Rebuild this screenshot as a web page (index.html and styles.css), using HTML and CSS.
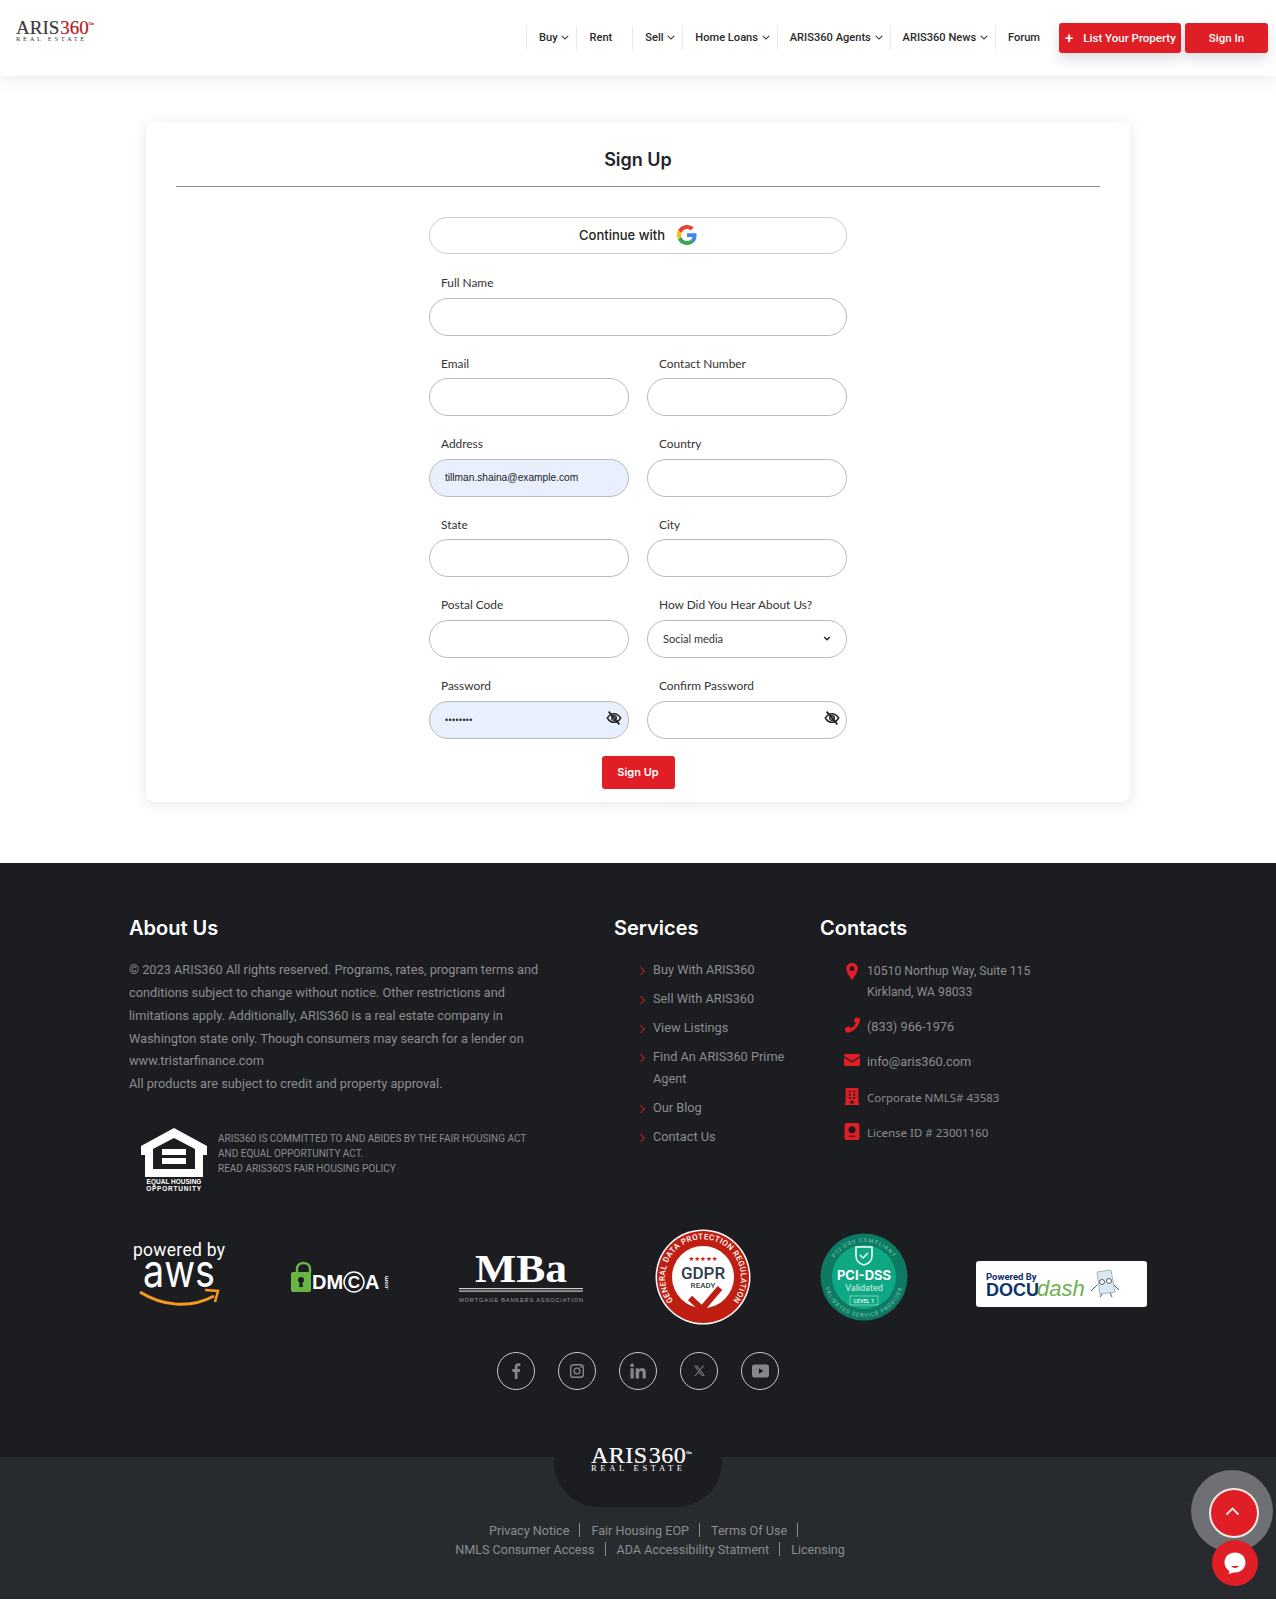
FILE: index.html

```html
<!DOCTYPE html>
<html lang="en">
<head>
  <meta charset="UTF-8" />
  <meta name="viewport" content="width=device-width, initial-scale=1" />
  <title>Sign Up - ARIS360</title>
  <link rel="stylesheet" href="styles.css">
</head>
<body>
  <header class="topbar">
    <a class="logo" href="#">
      <span class="logo-main">ARIS<b>360</b><sup>On</sup></span>
      <span class="logo-sub">REAL ESTATE</span>
    </a>
    <div class="topbar-right">
      <ul class="nav">
        <li><a href="#">Buy <svg class="caret" viewBox="0 0 10 6"><path d="M1 1l4 4 4-4"/></svg></a></li>
        <li class="nav-rent"><a href="#">Rent</a></li>
        <li><a href="#">Sell <svg class="caret" viewBox="0 0 10 6"><path d="M1 1l4 4 4-4"/></svg></a></li>
        <li><a href="#">Home Loans <svg class="caret" viewBox="0 0 10 6"><path d="M1 1l4 4 4-4"/></svg></a></li>
        <li><a href="#">ARIS360 Agents <svg class="caret" viewBox="0 0 10 6"><path d="M1 1l4 4 4-4"/></svg></a></li>
        <li><a href="#">ARIS360 News <svg class="caret" viewBox="0 0 10 6"><path d="M1 1l4 4 4-4"/></svg></a></li>
        <li class="nav-last"><a href="#">Forum</a></li>
      </ul>
      <a class="btn-red btn-list" href="#"><span class="plus">+</span>List Your Property</a>
      <a class="btn-red btn-signin" href="#">Sign In</a>
    </div>
  </header>

  <main class="page">
    <section class="card">
      <h2 class="card-title">Sign Up</h2>
      <form class="signup">
        <button type="button" class="google-btn">
          Continue with
          <svg class="google-g" viewBox="0 0 48 48">
            <path fill="#EA4335" d="M24 9.5c3.5 0 6.7 1.2 9.2 3.6l6.9-6.9C35.9 2.4 30.5 0 24 0 14.6 0 6.5 5.4 2.6 13.2l8 6.2C12.5 13.7 17.800 9.500 24 9.500z"/>
            <path fill="#4285F4" d="M46.900 24.500c0-1.600-.1-3.100-.4-4.500H24v9h12.900c-.6 3-2.200 5.500-4.700 7.200l7.700 6c4.500-4.200 7-10.300 7-17.700z"/>
            <path fill="#FBBC05" d="M10.600 28.600c-.5-1.400-.8-3-.8-4.600s.3-3.200.8-4.600l-8-6.200C.9 16.500 0 20.100 0 24s.9 7.500 2.600 10.800l8-6.200z"/>
            <path fill="#34A853" d="M24 48c6.500 0 11.900-2.100 15.900-5.800l-7.700-6c-2.200 1.400-4.900 2.300-8.200 2.300-6.200 0-11.500-4.200-13.400-9.900l-8 6.200C6.500 42.600 14.600 48 24 48z"/>
          </svg>
        </button>
        <div class="fields">
          <div class="field field-wide">
            <label for="fullname">Full Name</label>
            <input id="fullname" type="text" />
          </div>
          <div class="field">
            <label for="email">Email</label>
            <input id="email" type="text" />
          </div>
          <div class="field">
            <label for="phone">Contact Number</label>
            <input id="phone" type="text" />
          </div>
          <div class="field">
            <label for="address">Address</label>
            <input id="address" class="filled" type="text" value="tillman.shaina@example.com" />
          </div>
          <div class="field">
            <label for="country">Country</label>
            <input id="country" type="text" />
          </div>
          <div class="field">
            <label for="state">State</label>
            <input id="state" type="text" />
          </div>
          <div class="field">
            <label for="city">City</label>
            <input id="city" type="text" />
          </div>
          <div class="field">
            <label for="postal">Postal Code</label>
            <input id="postal" type="text" />
          </div>
          <div class="field">
            <label for="hear">How Did You Hear About Us?</label>
            <div class="input-wrap">
              <select id="hear">
                <option>Social media</option>
                <option>Friend</option>
                <option>Other</option>
              </select>
              <svg class="select-arrow" viewBox="0 0 10 6"><path d="M1.500 1l3.500 3.500L8.500 1"/></svg>
            </div>
          </div>
          <div class="field">
            <label for="password">Password</label>
            <div class="input-wrap">
              <input id="password" class="filled pass" type="password" value="password" />
              <svg class="eye" viewBox="0 0 24 24"><path d="M2 12c2.600-4.300 6-6.500 10-6.500s7.400 2.200 10 6.500c-2.600 4.300-6 6.500-10 6.500S4.600 16.300 2 12z"/><circle cx="12" cy="12" r="3.400"/><path class="eye-slash" d="M4 2.500l16 19"/></svg>
            </div>
          </div>
          <div class="field">
            <label for="confirm">Confirm Password</label>
            <div class="input-wrap">
              <input id="confirm" type="password" />
              <svg class="eye" viewBox="0 0 24 24"><path d="M2 12c2.600-4.300 6-6.500 10-6.500s7.400 2.200 10 6.500c-2.600 4.300-6 6.500-10 6.500S4.600 16.300 2 12z"/><circle cx="12" cy="12" r="3.400"/><path class="eye-slash" d="M4 2.500l16 19"/></svg>
            </div>
          </div>
        </div>
        <button type="submit" class="btn-red btn-submit">Sign Up</button>
      </form>
    </section>
  </main>

  <footer class="footer">
    <div class="footer-cols">
      <div class="about">
        <h3>About Us</h3>
        <p>© 2023 ARIS360 All rights reserved. Programs, rates, program terms and<br>conditions subject to change without notice. Other restrictions and<br>limitations apply. Additionally, ARIS360 is a real estate company in<br>Washington state only. Though consumers may search for a lender on<br>www.tristarfinance.com<br>All products are subject to credit and property approval.</p>
        <div class="fair-housing">
          <svg class="eho" viewBox="0 0 68 64">
            <path fill="#fff" d="M34 0L1 18v9h4v22h58V27h4v-9zM55 41H13V21l21-11 21 11z"/>
            <rect x="22" y="21" width="24" height="6" fill="#fff"/>
            <rect x="22" y="30" width="24" height="6" fill="#fff"/>
            <text x="34" y="56" class="eho-text">EQUAL HOUSING</text>
            <text x="34" y="63" class="eho-text eho-wide">OPPORTUNITY</text>
          </svg>
          <p>ARIS360 IS COMMITTED TO AND ABIDES BY THE FAIR HOUSING ACT<br>AND EQUAL OPPORTUNITY ACT.<br>READ ARIS360'S FAIR HOUSING POLICY</p>
        </div>
      </div>
      <div class="services">
        <h3>Services</h3>
        <ul>
          <li><a href="#">Buy With ARIS360</a></li>
          <li><a href="#">Sell With ARIS360</a></li>
          <li><a href="#">View Listings</a></li>
          <li><a href="#">Find An ARIS360 Prime Agent</a></li>
          <li><a href="#">Our Blog</a></li>
          <li><a href="#">Contact Us</a></li>
        </ul>
      </div>
      <div class="contacts">
        <h3>Contacts</h3>
        <ul>
          <li class="contact-addr">
            <svg class="cicon" viewBox="0 0 16 20"><path fill-rule="evenodd" d="M8 1C4.200 1 1.800 3.700 1.800 7c0 3.800 6.200 12 6.200 12s6.200-8.200 6.200-12C14.200 3.700 11.800 1 8 1zm0 8.500A2.500 2.500 0 1 1 8 4.500a2.500 2.500 0 0 1 0 5z"/></svg>
            <span>10510 Northup Way, Suite 115<br>Kirkland, WA 98033</span>
          </li>
          <li>
            <svg class="cicon" viewBox="0 0 16 16"><path d="M15.600 1.200L12.200.3c-.4-.1-.8.100-.9.500L9.900 4c-.1.300 0 .6.200.8l1.700 1.400c-1 2.200-2.800 4-5 5l-1.400-1.700c-.2-.2-.5-.3-.8-.2L1.400 10.700c-.4.200-.6.500-.5.900l.8 3.400c.1.300.4.600.8.600C9.100 15.600 16 8.800 16 1.900c0-.3-.1-.6-.4-.7z"/></svg>
            <span>(833) 966-1976</span>
          </li>
          <li>
            <svg class="cicon" viewBox="0 0 16 12"><path d="M0 1.500C0 .7.700 0 1.500 0h13c.8 0 1.500.7 1.500 1.500v.4L8 7 0 1.900zM0 3.400V10.500c0 .8.700 1.500 1.500 1.500h13c.8 0 1.500-.7 1.500-1.500V3.400L8 8.600z"/></svg>
            <span>info@aris360.com</span>
          </li>
          <li class="contact-alt">
            <svg class="cicon cicon-tall" viewBox="0 0 14 16"><path fill-rule="evenodd" d="M1 0h12v14.500h1V16H0v-1.500h1zm3 2.500v1.500h2V2.500zm4 0v1.500h2V2.500zM4 5.500V7h2V5.500zm4 0V7h2V5.500zM4 8.500V10h2V8.500zm4 0V10h2V8.500zM5.500 12v2.500h3V12z"/></svg>
            <span>Corporate NMLS# 43583</span>
          </li>
          <li class="contact-alt">
            <svg class="cicon cicon-tall" viewBox="0 0 14 16"><path fill-rule="evenodd" d="M1.500 0h11C13.300 0 14 .7 14 1.500v13c0 .8-.7 1.500-1.500 1.500h-11C.7 16 0 15.300 0 14.500v-13C0 .7.700 0 1.500 0zM7 3a3.300 3.300 0 1 0 0 6.600A3.300 3.300 0 0 0 7 3zM4 12v1h6v-1z"/></svg>
            <span>License ID # 23001160</span>
          </li>
        </ul>
      </div>
    </div>

    <div class="badges">
      <svg class="badge-aws" viewBox="0 0 100 72">
        <text x="50" y="15" class="aws-small" textLength="92">powered by</text>
        <text x="50" y="46" class="aws-big" textLength="72" lengthAdjust="spacingAndGlyphs">aws</text>
        <path d="M11 51c22 14 50 17 74 4" class="aws-smile"/>
        <path d="M76 49l13 1-3 11" class="aws-smile aws-arrow"/>
      </svg>
      <svg class="badge-dmca" viewBox="0 0 100 32">
        <path d="M6 12V8c0-8 13-8 13 0v4" class="dmca-shackle"/>
        <rect x="0" y="11" width="20" height="20" rx="2" fill="#69b643"/>
        <circle cx="10" cy="19" r="3" fill="#1c1d21"/>
        <path d="M9 20h2l1 6H8z" fill="#1c1d21"/>
        <text x="21" y="28" class="dmca-text">DM</text>
        <circle cx="63" cy="21" r="10" class="dmca-ring"/>
        <text x="63" y="27" class="dmca-c">C</text>
        <text x="74" y="28" class="dmca-text">A</text>
        <text x="0" y="0" transform="translate(97 29) rotate(-90)" class="dmca-com">.com</text>
      </svg>
      <svg class="badge-mba" viewBox="0 0 124 48">
        <text x="62" y="26" class="mba-big" textLength="92" lengthAdjust="spacingAndGlyphs">MBa</text>
        <rect x="0" y="32" width="124" height="1.200" fill="#ccc"/>
        <rect x="0" y="34.500" width="124" height="1.200" fill="#ccc"/>
        <text x="62" y="46" class="mba-small" textLength="124">MORTGAGE BANKERS ASSOCIATION</text>
      </svg>
      <svg class="badge-gdpr" viewBox="0 0 96 96">
        <circle cx="48" cy="48" r="47.500" fill="#fff"/>
        <circle cx="48" cy="48" r="46" fill="#bf1e12"/>
        <circle cx="48" cy="48" r="31" fill="#fff"/>
        <path id="gdprArc" d="M21 75a38 38 0 1 1 54 0" fill="none"/>
        <text class="gdpr-arc"><textPath href="#gdprArc" startOffset="50%">GENERAL DATA PROTECTION REGULATION</textPath></text>
        <text x="48" y="32" class="gdpr-stars">★★★★★</text>
        <text x="48" y="50" class="gdpr-main">GDPR</text>
        <text x="48" y="59" class="gdpr-ready">READY</text>
        <path d="M35 69l12 11 18-21" class="gdpr-check"/>
      </svg>
      <svg class="badge-pci" viewBox="0 0 88 88">
        <circle cx="44" cy="44" r="43.500" fill="#0d7a63"/>
        <circle cx="44" cy="44" r="32" fill="#0fa884"/>
        <path id="pciTop" d="M9 44a35 35 0 0 1 70 0" fill="none"/>
        <path id="pciBottom" d="M4 44a40 40 0 0 0 80 0" fill="none"/>
        <text class="pci-arc"><textPath href="#pciTop" startOffset="50%">PCI-DSS COMPLIANT</textPath></text>
        <text class="pci-arc"><textPath href="#pciBottom" startOffset="50%">VALIDATED SERVICE PROVIDER</textPath></text>
        <path d="M36 14h16v9c0 5-4 8-8 9-4-1-8-4-8-9z" class="pci-line"/>
        <path d="M40 22l3 3 5-5" class="pci-line"/>
        <text x="44" y="47" class="pci-main">PCI-DSS</text>
        <text x="44" y="58" class="pci-valid">Validated</text>
        <rect x="30" y="63" width="28" height="9" fill="none" stroke="#9fdcc9" stroke-width=".7"/>
        <text x="44" y="70" class="pci-level">LEVEL 1</text>
      </svg>
      <svg class="badge-docu" viewBox="0 0 171 46">
        <rect width="171" height="46" rx="3" fill="#fff"/>
        <text x="10" y="19" class="docu-small">Powered By</text>
        <text x="10" y="35" class="docu-big">DOCU</text>
        <text x="61" y="35" class="docu-dash">dash</text>
        <g transform="translate(-6 0)">
          <path d="M127 11l14-2 4 22-15 2z" fill="#dbe9f5" stroke="#8aa" stroke-width=".8"/>
          <circle cx="132" cy="21" r="2.500" fill="#fff" stroke="#334" stroke-width=".8"/>
          <circle cx="139" cy="20" r="2.500" fill="#fff" stroke="#334" stroke-width=".8"/>
          <path d="M127 24l-6 6M144 24l5 5M132 33l-2 3M140 32l2 4" stroke="#456" stroke-width="1" fill="none"/>
        </g>
      </svg>
    </div>

    <ul class="social">
      <li><a href="#"><svg viewBox="0 0 16 16"><path d="M9.500 16V9h2.300l.4-2.900H9.500V4.400c0-.8.300-1.400 1.400-1.400h1.400V.4C12 .3 11.200.2 10.400.2 8.300.2 6.800 1.500 6.800 3.900v2.200H4.400V9h2.400v7z"/></svg></a></li>
      <li><a href="#"><svg viewBox="0 0 16 16"><path fill-rule="evenodd" d="M4.500 1h7A3.500 3.500 0 0 1 15 4.500v7a3.500 3.500 0 0 1-3.500 3.500h-7A3.500 3.500 0 0 1 1 11.500v-7A3.500 3.500 0 0 1 4.500 1zm0 1.400a2.100 2.100 0 0 0-2.100 2.100v7c0 1.200.9 2.100 2.100 2.100h7a2.100 2.100 0 0 0 2.100-2.100v-7a2.100 2.100 0 0 0-2.100-2.100zM8 4.400a3.600 3.600 0 1 1 0 7.200 3.600 3.600 0 0 1 0-7.200zm0 1.400a2.200 2.200 0 1 0 0 4.400 2.200 2.200 0 0 0 0-4.400zM11.900 3.300a.9.900 0 1 1 0 1.800.9.900 0 0 1 0-1.800z"/></svg></a></li>
      <li><a href="#"><svg viewBox="0 0 16 16"><path d="M.5 5.300h3.200V15.500H.5zM2.100.5a1.800 1.800 0 1 1 0 3.700 1.800 1.800 0 0 1 0-3.700zM5.700 5.300h3v1.400c.5-.9 1.600-1.700 3.200-1.700 3.300 0 3.900 2.200 3.900 5v5.500h-3.200v-4.900c0-1.200 0-2.700-1.600-2.700s-1.900 1.300-1.900 2.600v5H5.700z"/></svg></a></li>
      <li><a href="#"><svg viewBox="0 0 16 16"><path d="M1.500 2h4l3 4.200L12.200 2h1.500L9.200 7.200 14.500 14.500h-4L7.200 10 3.300 14.500H1.800L6.500 9zM3.700 3l7.300 10.500h1.400L5 3z"/></svg></a></li>
      <li><a href="#"><svg viewBox="0 0 18 14"><path fill-rule="evenodd" d="M3 0h12a3 3 0 0 1 3 3v8a3 3 0 0 1-3 3H3a3 3 0 0 1-3-3V3a3 3 0 0 1 3-3zm4.300 4v6l5-3z"/></svg></a></li>
    </ul>
  </footer>

  <div class="bottom">
    <div class="bottom-tab">
      <a class="logo logo-light" href="#">
        <span class="logo-main">ARIS<b>360</b><sup>On</sup></span>
        <span class="logo-sub">REAL ESTATE</span>
      </a>
    </div>
    <ul class="legal">
      <li><a href="#">Privacy Notice</a></li>
      <li><a href="#">Fair Housing EOP</a></li>
      <li><a href="#">Terms Of Use</a></li>
    </ul>
    <ul class="legal legal-second">
      <li><a href="#">NMLS Consumer Access</a></li>
      <li><a href="#">ADA Accessibility Statment</a></li>
      <li class="legal-end"><a href="#">Licensing</a></li>
    </ul>
  </div>

  <a class="to-top" href="#"><svg viewBox="0 0 20 12"><path d="M2 10l8-8 8 8"/></svg></a>
  <a class="chat" href="#"><svg viewBox="0 0 24 24"><path d="M12 1.500C6 1.500 1.500 5.800 1.500 11.500c0 3.700 2 6.900 5 8.700L5.500 23l5.400-1.600c.4 0 .7.100 1.100.100 6 0 10.500-4.300 10.500-10S18 1.500 12 1.500z"/><path class="chat-smile" d="M8 15c2.200 2.600 5.800 2.600 8 0z"/></svg></a>
</body>
</html>
```

FILE: styles.css

```css
* {
  box-sizing: border-box;
}
body {
  margin: 0;
  font-family: 'Roboto', 'Inter', sans-serif;
  background-color: #fff;
  color: #212529;
}
a {
  color: inherit;
  text-decoration: none;
}
ul {
  list-style: none;
  margin: 0;
  padding: 0;
}

/* header */
.topbar {
  height: 76px;
  padding: 0 8px 0 16px;
  display: flex;
  justify-content: space-between;
  background-color: #fff;
  box-shadow: 0 4px 16px rgba(0, 0, 0, 0.08);
}
.logo {
  display: block;
  width: 82px;
  margin-top: 20px;
  font-family: 'Liberation Serif', serif;
  color: #3b3b3b;
}
.logo-main {
  display: block;
  font-size: 19px;
  line-height: 15px;
  white-space: nowrap;
  -webkit-text-stroke: 0.2px currentColor;
}
.logo-main b {
  font-weight: 400;
  color: #b3201c;
  margin-left: 1px;
}
.logo-main sup {
  font-size: 4px;
  line-height: 0;
  vertical-align: 9px;
  color: #b3201c;
}
.logo-sub {
  display: block;
  font-size: 6.500px;
  line-height: 7px;
  letter-spacing: 2.700px;
  white-space: nowrap;
}
.topbar-right {
  display: flex;
  align-items: flex-start;
}
.nav {
  display: flex;
  margin-top: 26px;
  margin-right: 19px;
  font-size: 11.100px;
  font-weight: 500;
  color: #2b2b2b;
}
.nav li {
  height: 24px;
  line-height: 23px;
  padding: 0 7px 0 12px;
  border-left: 1px solid #eaeaea;
  white-space: nowrap;
}
.nav .nav-rent {
  padding-right: 20px;
}
.nav .nav-last {
  padding-right: 0;
}
.caret {
  width: 8px;
  height: 5px;
  margin-left: 1px;
  vertical-align: 1px;
  fill: none;
  stroke: #333;
  stroke-width: 1.300;
}
.btn-red {
  display: inline-block;
  border: none;
  border-radius: 3px;
  background-color: #e01e26;
  color: #fff;
  font-family: inherit;
  font-size: 11.500px;
  font-weight: 500;
  cursor: pointer;
  white-space: nowrap;
}
.btn-list,
.btn-signin {
  height: 30px;
  margin-top: 23px;
  line-height: 30px;
  box-shadow: 0 6px 14px rgba(0, 0, 0, 0.14);
}
.btn-list {
  width: 122px;
  padding-left: 6px;
}
.plus {
  font-size: 15px;
  font-weight: 500;
  margin-right: 10px;
  vertical-align: -1px;
}
.btn-signin {
  width: 83px;
  margin-left: 4px;
  text-align: center;
}

/* sign up card */
.page {
  padding: 46px 0 61px;
}
.card {
  width: 984px;
  margin: 0 auto;
  padding: 0 30px 13px;
  background-color: #fff;
  border-radius: 8px;
  box-shadow: 0 2px 14px rgba(0, 0, 0, 0.1);
}
.card-title {
  margin: 0;
  height: 64.500px;
  border-bottom: 1px solid #8a8a8a;
  padding-top: 26px;
  text-align: center;
  font-family: 'Inter', sans-serif;
  font-size: 18px;
  line-height: 24px;
  font-weight: 600;
  color: #212529;
}
.signup {
  width: 418px;
  margin: 30px auto 0;
  text-align: center;
}
.google-btn {
  width: 100%;
  height: 37.500px;
  margin-bottom: 2.500px;
  display: flex;
  align-items: center;
  justify-content: center;
  border: 1px solid #ccc;
  border-radius: 19px;
  background-color: #fff;
  font-family: 'Inter', sans-serif;
  font-size: 13px;
  font-weight: 500;
  color: #222;
}
.google-g {
  width: 20px;
  height: 20px;
  margin-left: 12px;
}
.fields {
  display: grid;
  grid-template-columns: 200px 200px;
  gap: 19px 18px;
  margin-top: 20px;
  text-align: left;
}
.field-wide {
  grid-column: 1 / 3;
}
.field label {
  display: block;
  height: 18px;
  margin-bottom: 5.600px;
  padding-left: 12px;
  font-family: 'Lato', sans-serif;
  font-size: 11.900px;
  line-height: 18px;
  color: #333;
}
.field input,
.field select {
  display: block;
  width: 100%;
  height: 38px;
  padding: 0 15px;
  border: 1px solid #bbb;
  border-radius: 19px;
  background-color: #fff;
  font-family: 'Liberation Sans', sans-serif;
  font-size: 10.200px;
  color: #222;
  outline: none;
}
.field input.filled {
  background-color: #e8f0fe;
}
.field input.pass {
  font-size: 8.500px;
  letter-spacing: 0.5px;
}
.field select {
  appearance: none;
  font-family: 'Lato', sans-serif;
  font-size: 11px;
  color: #333;
}
.input-wrap {
  position: relative;
}
.select-arrow {
  position: absolute;
  right: 16px;
  top: 16px;
  width: 8px;
  height: 5px;
  fill: none;
  stroke: #222;
  stroke-width: 1.800;
}
.eye {
  position: absolute;
  right: 7px;
  top: 9px;
  width: 16px;
  height: 16px;
  fill: none;
  stroke: #222;
  stroke-width: 2.200;
}
.eye-slash {
  stroke-width: 2.600;
}
.btn-submit {
  width: 73px;
  height: 33px;
  margin-top: 17px;
  font-family: 'Inter', sans-serif;
  font-size: 11px;
  font-weight: 600;
}

/* footer */
.footer {
  height: 594px;
  padding: 53px 129px 0;
  background-color: #1c1d21;
  color: #8b8d90;
}
.footer-cols {
  display: grid;
  grid-template-columns: 485px 206px 1fr;
  height: 276px;
}
.footer h3 {
  margin: 0 0 19.600px;
  font-family: 'Inter', sans-serif;
  font-size: 20px;
  line-height: 24px;
  font-weight: 600;
  color: #fff;
}
.about p {
  margin: 0;
  font-size: 12.750px;
  line-height: 22.800px;
  white-space: nowrap;
}
.fair-housing {
  display: flex;
  margin: 32px 0 0 11px;
}
.eho {
  width: 68px;
  height: 64px;
  flex-shrink: 0;
}
.eho-text {
  fill: #fff;
  font-family: 'Liberation Sans', sans-serif;
  font-size: 6.500px;
  font-weight: 700;
  text-anchor: middle;
}
.eho-wide {
  letter-spacing: 0.8px;
}
.fair-housing p {
  margin: 4px 0 0 10px;
  font-size: 10px;
  line-height: 14.900px;
}
.services ul {
  padding-left: 24px;
  font-size: 12.750px;
  line-height: 22.800px;
}
.services li {
  position: relative;
  margin-bottom: 6px;
  padding-left: 15px;
  width: 165px;
}
.services li::before {
  content: "";
  position: absolute;
  left: 0;
  top: 9px;
  width: 4.500px;
  height: 4.500px;
  border-top: 1.500px solid #c81e24;
  border-right: 1.500px solid #c81e24;
  transform: rotate(45deg);
}
.contacts ul {
  padding-left: 24px;
  padding-top: 2px;
  font-size: 12.750px;
  line-height: 20.400px;
}
.contacts li {
  display: flex;
  align-items: flex-start;
  margin-bottom: 15px;
}
.cicon {
  width: 16px;
  height: 16px;
  margin-right: 7px;
  flex-shrink: 0;
  fill: #e01e26;
}
.contact-addr .cicon {
  height: 19px;
  margin-top: 1px;
}
.contact-addr span {
  font-size: 12.200px;
}
.contact-alt span {
  font-family: 'Noto Sans', sans-serif;
  font-size: 11.500px;
}
.cicon-tall {
  height: 17px;
}

/* logos */
.badges {
  display: flex;
  align-items: center;
  gap: 68px;
  height: 94px;
  margin-top: 38px;
}
.badges svg {
  overflow: visible;
}
.badge-aws {
  width: 100px;
  height: 72px;
}
.aws-small {
  fill: #fff;
  font-size: 17.500px;
  text-anchor: middle;
}
.aws-big {
  fill: #fff;
  font-family: 'Inter', sans-serif;
  font-size: 46px;
  font-weight: 400;
  text-anchor: middle;
}
.aws-smile {
  fill: none;
  stroke: #f79a1c;
  stroke-width: 3;
}
.aws-arrow {
  stroke-width: 2.500;
}
.badge-dmca {
  width: 100px;
  height: 32px;
  margin-left: -6px;
}
.dmca-shackle {
  fill: none;
  stroke: #69b643;
  stroke-width: 2.500;
}
.dmca-text {
  fill: #fff;
  font-family: 'Liberation Sans', sans-serif;
  font-size: 20px;
  font-weight: 700;
}
.dmca-ring {
  fill: none;
  stroke: #fff;
  stroke-width: 1.500;
}
.dmca-c {
  fill: #fff;
  font-family: 'Liberation Sans', sans-serif;
  font-size: 17px;
  font-weight: 700;
  text-anchor: middle;
}
.dmca-com {
  fill: #fff;
  font-family: 'Liberation Sans', sans-serif;
  font-size: 6px;
  font-weight: 700;
}
.badge-mba {
  width: 124px;
  height: 48px;
  margin-top: 6px;
}
.mba-big {
  fill: #fff;
  font-family: 'Liberation Serif', serif;
  font-size: 39px;
  font-weight: 700;
  text-anchor: middle;
}
.mba-small {
  fill: #9a9a9a;
  font-family: 'Liberation Sans', sans-serif;
  font-size: 5.800px;
  text-anchor: middle;
}
.badge-gdpr {
  width: 96px;
  height: 96px;
  margin-left: 4px;
}
.gdpr-arc {
  fill: #fff;
  font-size: 8px;
  font-weight: 500;
  text-anchor: middle;
  letter-spacing: 0.4px;
}
.gdpr-stars {
  fill: #bf1e12;
  font-family: 'DejaVu Sans', sans-serif;
  font-size: 6.500px;
  text-anchor: middle;
}
.gdpr-main {
  fill: #2c3e46;
  font-size: 17px;
  font-weight: 500;
  text-anchor: middle;
}
.gdpr-ready {
  fill: #2c3e46;
  font-size: 8px;
  font-weight: 500;
  text-anchor: middle;
}
.gdpr-check {
  fill: none;
  stroke: #bf1e12;
  stroke-width: 6;
}
.badge-pci {
  width: 88px;
  height: 88px;
  margin-left: 1px;
}
.pci-arc {
  fill: #7fcdb8;
  font-size: 5.500px;
  letter-spacing: 1px;
  text-anchor: middle;
}
.pci-line {
  fill: none;
  stroke: #fff;
  stroke-width: 1.500;
}
.pci-main {
  fill: #fff;
  font-family: 'Inter', sans-serif;
  font-size: 13px;
  font-weight: 700;
  text-anchor: middle;
}
.pci-valid {
  fill: #d8f3ea;
  font-size: 9px;
  text-anchor: middle;
}
.pci-level {
  fill: #d8f3ea;
  font-size: 5.500px;
  font-weight: 700;
  text-anchor: middle;
}
.badge-docu {
  width: 171px;
  height: 46px;
  margin-top: 14px;
}
.docu-small {
  fill: #10306b;
  font-size: 9.500px;
  font-weight: 700;
}
.docu-big {
  fill: #10306b;
  font-family: 'Liberation Sans', sans-serif;
  font-size: 18px;
  font-weight: 700;
}
.docu-dash {
  fill: #6fb04f;
  font-family: 'Liberation Sans', sans-serif;
  font-size: 22px;
  font-style: italic;
}

/* social */
.social {
  display: flex;
  justify-content: center;
  gap: 23px;
  margin-top: 28px;
}
.social a {
  display: flex;
  align-items: center;
  justify-content: center;
  width: 38px;
  height: 38px;
  border: 1px solid #c8c8c8;
  border-radius: 50%;
}
.social svg {
  width: 16px;
  height: 16px;
  fill: #85878a;
}
.social li:nth-child(5) svg {
  width: 17px;
}
.social li:nth-child(4) svg {
  width: 13px;
  height: 13px;
}

/* bottom band */
.bottom {
  height: 142px;
  background-color: #272a2e;
  color: #8b8d90;
  font-size: 12.600px;
}
.bottom-tab {
  width: 168px;
  height: 50px;
  margin: 0 auto 14.500px;
  background-color: #1c1d21;
  border-radius: 0 0 45px 45px;
}
.logo-light {
  width: 104px;
  margin: 0 auto;
  color: #fff;
  transform: translate(5px, -11px);
}
.logo-light .logo-main {
  font-size: 24px;
  line-height: 18px;
  letter-spacing: 0.5px;
}
.logo-light .logo-main b,
.logo-light .logo-main sup {
  color: #fff;
}
.logo-light .logo-sub {
  font-size: 8.500px;
  line-height: 9px;
  letter-spacing: 3.700px;
}
.legal {
  display: flex;
  justify-content: center;
  line-height: 19px;
}
.legal li {
  padding: 0 11px;
  position: relative;
}
.legal li::after {
  content: "";
  position: absolute;
  right: 0;
  top: 2px;
  height: 14px;
  border-right: 1px solid #8b8d90;
}
.legal .legal-end::after {
  display: none;
}
.legal-second {
  margin-left: 24px;
}

/* floating buttons */
.to-top {
  position: fixed;
  right: 3px;
  top: 1470px;
  width: 82px;
  height: 82px;
  border-radius: 50%;
  background-color: #6e7073;
  display: flex;
  align-items: center;
  justify-content: center;
}
.to-top::before {
  content: "";
  position: absolute;
  left: 18px;
  top: 18px;
  width: 46px;
  height: 46px;
  border-radius: 50%;
  border: 2px solid #f1ece6;
  background-color: #e01e26;
}
.to-top svg {
  position: relative;
  width: 15px;
  height: 9px;
  fill: none;
  stroke: #f5e9e4;
  stroke-width: 2.400;
}
.chat {
  position: fixed;
  right: 18px;
  top: 1540px;
  width: 46px;
  height: 46px;
  border-radius: 50%;
  background-color: #e01e26;
  display: flex;
  align-items: center;
  justify-content: center;
}
.chat svg {
  width: 24px;
  height: 24px;
  fill: #fff;
}
.chat .chat-smile {
  fill: #e01e26;
}
```
